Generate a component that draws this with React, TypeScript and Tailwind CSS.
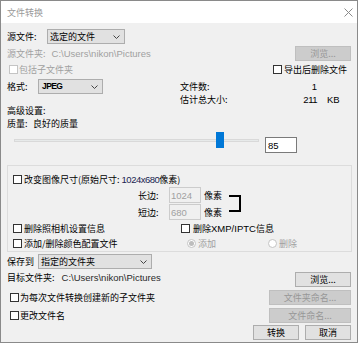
import React from "react";

const L = ({ children, className = "" }: { children: React.ReactNode; className?: string }) => (
  <span className={`font-['Liberation_Sans',sans-serif] text-[9.5px] ${className}`}>{children}</span>
);

const Box = ({ disabled = false, className = "" }: { disabled?: boolean; className?: string }) => (
  <span
    className={
      disabled
        ? `block w-[9px] h-[9px] border border-[#c4c4c4] bg-white shrink-0 ${className}`
        : `block w-[9px] h-[9px] border border-[#333333] bg-white shrink-0 ${className}`
    }
  />
);

const Radio = ({ checked = false, className = "" }: { checked?: boolean; className?: string }) => (
  <span className={`flex items-center justify-center w-[9px] h-[9px] rounded-full border border-[#c4c4c4] bg-white shrink-0 ${className}`}>
    {checked ? <span className="block w-[5px] h-[5px] rounded-full bg-[#bdbdbd]" /> : null}
  </span>
);

const Chev = () => (
  <svg width="7" height="4" viewBox="0 0 7 4" className="shrink-0">
    <polyline points="0.5,0.5 3.5,3.5 6.5,0.5" fill="none" stroke="#444444" strokeWidth="1" />
  </svg>
);

const Btn = ({ children, disabled = false, className = "" }: { children: React.ReactNode; disabled?: boolean; className?: string }) => (
  <div
    className={
      disabled
        ? `h-[15px] flex items-center justify-center bg-[#cccccc] border border-[#bfbfbf] text-[#979797] shrink-0 ${className}`
        : `h-[15px] flex items-center justify-center bg-[#e1e1e1] border border-[#adadad] text-black shrink-0 ${className}`
    }
  >
    {children}
  </div>
);

export default function App() {
  return (
    <div className="w-[360px] h-[345px] bg-white font-['Noto_Sans_CJK_SC',sans-serif] text-[9px] leading-[13px] text-black overflow-hidden">
      <div className="w-[358px] h-[343px] border border-[#8a8a8a] bg-[#f0f0f0] flex flex-col">
        {/* title bar */}
        <div className="h-[22px] bg-white flex items-center justify-between pl-[6px] pr-[4px] shrink-0">
          <span className="text-[#9a9a9a]">文件转换</span>
          <svg width="9" height="9" viewBox="0 0 9 9">
            <path d="M0.5 0.5 L8.5 8.5 M8.5 0.5 L0.5 8.5" stroke="#8a8a8a" strokeWidth="1" fill="none" />
          </svg>
        </div>

        <div className="flex flex-col px-[6px]">
          {/* 源文件 */}
          <div className="mt-[6px] h-[15px] flex items-center">
            <span className="w-[40px] shrink-0">源文件:</span>
            <div className="w-[78px] h-[15px] bg-[#e1e1e1] border border-[#adadad] flex items-center justify-between pl-[2px] pr-[4px]">
              <span>选定的文件</span>
              <Chev />
            </div>
          </div>

          {/* 源文件夹 */}
          <div className="mt-[2px] h-[15px] flex items-center justify-between">
            <span className="text-[#a0a0a0]">
              源文件夹:<L className="ml-[6px]">{"C:\\Users\\nikon\\Pictures"}</L>
            </span>
            <Btn disabled className="w-[56px]">浏览...</Btn>
          </div>

          {/* checkboxes */}
          <div className="mt-[2px] h-[13px] flex items-center">
            <Box disabled className="ml-[2px]" />
            <span className="ml-[1px] text-[#a0a0a0]">包括子文件夹</span>
            <div className="ml-auto mr-[4px] flex items-center">
              <Box />
              <span className="ml-[2px]">导出后删除文件</span>
            </div>
          </div>

          {/* 格式 + counts */}
          <div className="mt-[3px] flex items-start">
            <div className="w-[173px] h-[15px] flex items-center shrink-0">
              <span className="w-[31px] shrink-0">格式:</span>
              <div className="w-[65px] h-[15px] bg-[#e1e1e1] border border-[#adadad] flex items-center justify-between pl-[3px] pr-[4px]">
                <span className="font-['Liberation_Sans',sans-serif] text-[8.5px] font-bold tracking-[-0.6px]">JPEG</span>
                <Chev />
              </div>
            </div>
            <div className="mt-[1px] flex flex-col">
              <div className="h-[13px] flex items-center">
                <span className="w-[120px]">文件数:</span>
                <L className="w-[17px] text-right">1</L>
              </div>
              <div className="h-[13px] flex items-center">
                <span className="w-[120px]">估计总大小:</span>
                <L className="w-[17px] text-right tracking-[-0.5px]">211</L>
                <L className="ml-[10px]">KB</L>
              </div>
            </div>
          </div>

          {/* 高级设置 */}
          <div className="-mt-[2px] h-[13px] flex items-center">高级设置:</div>
          <div className="h-[13px] flex items-center">
            <span className="w-[26px] shrink-0">质量:</span>
            <span>良好的质量</span>
          </div>

          {/* slider */}
          <div className="mt-[2px] flex items-start">
            <div className="ml-[7px] w-[245px] h-[16px] flex items-center relative shrink-0">
              <div className="w-full h-[3px] bg-[#e7eaea] border border-[#d9d9d9]" />
              <div className="absolute left-[202px] top-0 w-[8px] h-[16px] bg-[#0078d7]" />
            </div>
            <div className="ml-[6px] mt-[5px] w-[32px] h-[16px] border border-[#7a7a7a] bg-white pl-[2px] flex items-center">
              <L>85</L>
            </div>
          </div>

          {/* group box */}
          <div className="mt-[12px] w-[345px] h-[87px] border border-[#dcdcdc] flex flex-col pl-[5px] shrink-0">
            <div className="mt-[7px] h-[13px] flex items-center">
              <Box />
              <span className="ml-[2px]">
                改变图像尺寸(原始尺寸: <L className="text-[#1a2550] tracking-[-0.5px]">1024x680</L>像素)
              </span>
            </div>

            <div className="mt-[1px] flex items-start">
              <div className="ml-[125px] flex flex-col gap-[1px]">
                <div className="h-[16px] flex items-center">
                  <span className="w-[31px] shrink-0">长边:</span>
                  <div className="w-[32px] h-[16px] border border-[#cccccc] bg-[#f0f0f0] pl-[1px] flex items-center">
                    <L className="text-[#a0a0a0]">1024</L>
                  </div>
                  <span className="ml-[3px]">像素</span>
                </div>
                <div className="h-[16px] flex items-center">
                  <span className="w-[31px] shrink-0">短边:</span>
                  <div className="w-[32px] h-[16px] border border-[#cccccc] bg-[#f0f0f0] pl-[1px] flex items-center">
                    <L className="text-[#a0a0a0]">680</L>
                  </div>
                  <span className="ml-[3px]">像素</span>
                </div>
              </div>
              <svg width="12" height="17" viewBox="0 0 12 17" className="ml-[7px] mt-[8px] shrink-0">
                <path d="M0 1 H11 V16 H0" stroke="#000000" strokeWidth="2" fill="none" />
              </svg>
            </div>

            <div className="mt-[2px] h-[13px] flex items-center">
              <div className="w-[168px] flex items-center shrink-0">
                <Box />
                <span className="ml-[2px]">删除照相机设置信息</span>
              </div>
              <Box />
              <span className="ml-[3px]">
                删除<L>XMP/IPTC</L>信息
              </span>
            </div>

            <div className="mt-[2px] h-[13px] flex items-center">
              <div className="w-[174px] flex items-center shrink-0">
                <Box />
                <span className="ml-[2px]">添加/删除颜色配置文件</span>
              </div>
              <Radio checked />
              <span className="ml-[2px] text-[#a0a0a0]">添加</span>
              <Radio className="ml-[52px]" />
              <span className="ml-[2px] text-[#a0a0a0]">删除</span>
            </div>
          </div>

          {/* 保存到 */}
          <div className="mt-[2px] h-[15px] flex items-center">
            <span className="w-[31px] shrink-0">保存到</span>
            <div className="w-[114px] h-[15px] bg-[#e1e1e1] border border-[#adadad] flex items-center justify-between pl-[2px] pr-[4px]">
              <span>指定的文件夹</span>
              <Chev />
            </div>
          </div>

          {/* 目标文件夹 */}
          <div className="mt-[2px] h-[17px] flex items-start">
            <span className="h-[13px]">
              目标文件夹:<L className="ml-[7px] text-[#2a2a2a]">{"C:\\Users\\nikon\\Pictures"}</L>
            </span>
            <Btn className="ml-auto mt-[1px] w-[56px]">浏览...</Btn>
          </div>

          {/* 为每次 */}
          <div className="mt-[2px] h-[15px] flex items-center">
            <Box className="ml-[3px]" />
            <span className="ml-[1px]">为每次文件转换创建新的子文件夹</span>
            <Btn disabled className="ml-auto w-[82px]">文件夹命名...</Btn>
          </div>

          {/* 更改文件名 */}
          <div className="mt-[3px] h-[15px] flex items-center">
            <Box className="ml-[3px]" />
            <span className="ml-[1px]">更改文件名</span>
            <Btn disabled className="ml-auto w-[82px]">文件命名...</Btn>
          </div>

          {/* buttons */}
          <div className="mt-[2px] h-[15px] flex items-center justify-end gap-[6px]">
            <Btn className="w-[46px]">转换</Btn>
            <Btn className="w-[46px]">取消</Btn>
          </div>
        </div>
      </div>
    </div>
  );
}
